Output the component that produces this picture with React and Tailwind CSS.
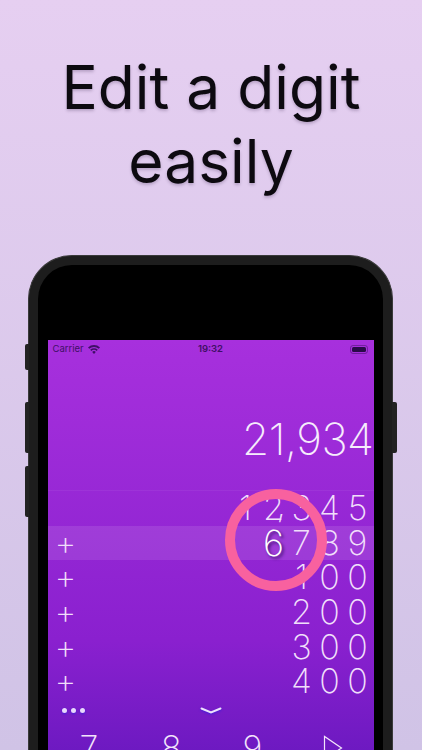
import React from 'react'

const rows = [
  { sign: '', digits: ['1', '2', '3', '4', '5'], comma: true },
  { sign: '+', digits: ['6', '7', '8', '9'], active: true },
  { sign: '+', digits: ['1', '0', '0'] },
  { sign: '+', digits: ['2', '0', '0'] },
  { sign: '+', digits: ['3', '0', '0'] },
  { sign: '+', digits: ['4', '0', '0'] },
]

function Digit({ value, comma, picked }) {
  return (
    <span
      className={
        'relative flex w-7 justify-center ' +
        (picked ? 'text-[36px] text-white [text-shadow:2px_2px_3px_rgba(40,10,90,0.8)]' : '')
      }
    >
      {value}
      {comma && <span className="absolute left-[17px] top-[-3px]">,</span>}
    </span>
  )
}

function Row({ sign, digits, comma, active }) {
  return (
    <div
      className={
        'flex h-[34.6px] items-center justify-between pl-[8px] pr-[2px] text-[34px] leading-none font-extralight text-[#f0dffa] ' +
        (active ? 'bg-white/10' : '')
      }
    >
      <span className="flex w-5 justify-center">{sign}</span>
      <div className="flex items-center">
        {digits.map((d, i) => (
          <Digit key={i} value={d} comma={comma && i === 1} picked={active && i === 0} />
        ))}
      </div>
    </div>
  )
}

function StatusBar() {
  return (
    <div className="relative flex h-[19px] items-center px-[5px] text-[9.5px] text-[#3f0f66]">
      <span>Carrier</span>
      <svg className="ml-[4px]" width="12" height="9" viewBox="0 0 12 9" fill="currentColor">
        <path d="M6 9 4.2 6.9a2.7 2.7 0 0 1 3.6 0zM3.3 5.9 2.2 4.7a5.6 5.6 0 0 1 7.6 0L8.7 5.9a4 4 0 0 0-5.4 0zM1.3 3.8 0 2.5a8.6 8.6 0 0 1 12 0l-1.3 1.3a6.8 6.8 0 0 0-9.4 0z" />
      </svg>
      <span className="absolute left-1/2 -translate-x-1/2 font-semibold">19:32</span>
      <div className="ml-auto mr-[1px] flex items-center">
        <div className="rounded-[3px] border border-[#3f0f66]/50 p-px">
          <div className="h-[5px] w-[14px] rounded-[1.5px] bg-[#2a0a4a]" />
        </div>
      </div>
    </div>
  )
}

function KeyRow() {
  return (
    <div className="mt-[12px] grid grid-cols-4 text-[34px] leading-none font-extralight text-[#f3e4fb]">
      <span className="ml-[32px] w-[17px] text-center">7</span>
      <span className="ml-[32px] w-[17px] text-center">8</span>
      <span className="ml-[32px] w-[17px] text-center">9</span>
      <svg className="ml-[31px] mt-[4px]" width="20" height="26" viewBox="0 0 20 26" fill="none" stroke="currentColor" strokeWidth="1.2">
        <path d="M1.5 1.5v23L18.5 13z" />
      </svg>
    </div>
  )
}

export default function App() {
  return (
    <div className="relative h-[750px] w-[422px] overflow-hidden bg-gradient-to-b from-[#e6cff1] to-[#d0c3e6] font-['Inter',sans-serif]">
      <h1 className="pt-[50px] text-center text-[60.5px] leading-[74px] font-normal text-[#0d0a10] [text-shadow:0_2px_3px_rgba(60,40,80,0.25)]">
        Edit a digit
        <br />
        easily
      </h1>

      <div className="relative mx-[28px] mt-[57px] h-[600px] w-[365px]">
        <div className="absolute -left-[3px] top-[89px] h-[26px] w-[4px] rounded-l-[2px] bg-[#222]" />
        <div className="absolute -left-[3px] top-[147px] h-[51px] w-[4px] rounded-l-[2px] bg-[#222]" />
        <div className="absolute -left-[3px] top-[211px] h-[51px] w-[4px] rounded-l-[2px] bg-[#222]" />
        <div className="absolute -right-[4px] top-[147px] h-[51px] w-[5px] rounded-r-[2px] bg-[#222]" />

        <div className="h-full rounded-t-[44px] border border-b-0 border-[#3a3a3a] bg-[#1d1d1d] p-[9px] pb-0">
          <div className="h-full rounded-t-[34px] bg-black px-[9.5px] pt-[75px]">
            <div className="relative h-[500px] bg-gradient-to-b from-[#a730dd] via-[#8a20cf] via-[60%] to-[#5710b6]">
              <StatusBar />

              <div className="mt-[53px] h-[78px] text-right text-[44px] leading-[54px] font-extralight tracking-[-0.5px] text-[#f6ecfc]">
                21,934
              </div>

              <div className="border-t border-white/5">
                {rows.map((r, i) => (
                  <Row key={i} {...r} />
                ))}
              </div>

              <div className="relative mt-[4px] flex h-[16px] items-center justify-center">
                <div className="absolute left-[14.5px] flex gap-[4px] drop-shadow-[0_1px_1px_rgba(60,30,220,0.9)]">
                  <span className="size-[5px] rounded-full bg-[#e8d8fb]" />
                  <span className="size-[5px] rounded-full bg-[#e8d8fb]" />
                  <span className="size-[5px] rounded-full bg-[#e8d8fb]" />
                </div>
                <svg className="drop-shadow-[0_1px_1px_rgba(60,30,220,0.9)]" width="22" height="8" viewBox="0 0 22 8" fill="none" stroke="#ece0fb" strokeWidth="2" strokeLinecap="round">
                  <path d="M1.5 1.5 11 5.5l9.5-4" />
                </svg>
              </div>

              <KeyRow />

              <div className="absolute left-[177px] top-[149px] size-[102px] rounded-full border-[10px] border-[#f8619f]" />
            </div>
          </div>
        </div>
      </div>
    </div>
  )
}
